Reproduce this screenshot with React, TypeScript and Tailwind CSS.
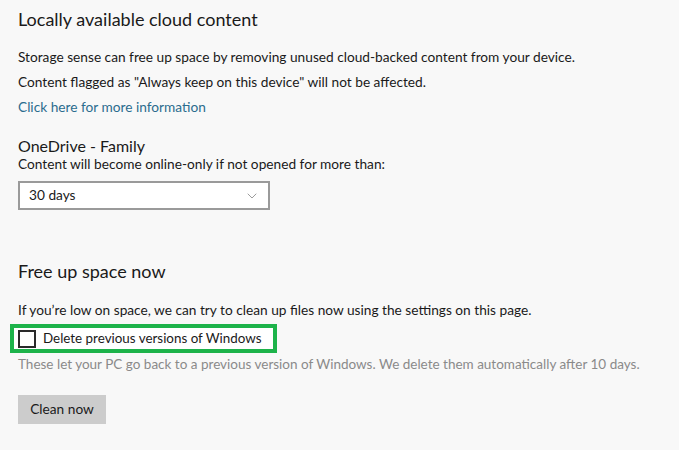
import { ChevronDown } from 'lucide-react';

const font = { fontFamily: 'Lato, "Noto Sans", sans-serif' };

export default function App() {
  return (
    <div className="w-[679px] h-[450px] bg-[#f8f8f8] text-[#1a1a1a] overflow-hidden" style={font}>
      <div className="pl-[18px] pt-[6px]">
        <h1 className="text-[18px] leading-[26px] font-normal">Locally available cloud content</h1>

        <p className="mt-[12px] text-[13.7px] leading-[25px] whitespace-nowrap">
          Storage sense can free up space by removing unused cloud-backed content from your device.
        </p>
        <p className="text-[13.7px] leading-[25px] whitespace-nowrap">
          Content flagged as "Always keep on this device" will not be affected.
        </p>
        <p className="text-[13.7px] leading-[25px] text-[#2b6c8e]">Click here for more information</p>

        <h2 className="mt-[16px] text-[16px] leading-[22px]">OneDrive - Family</h2>
        <p className="-mt-[3px] text-[13.7px] leading-[19px] whitespace-nowrap">
          Content will become online-only if not opened for more than:
        </p>
        <div className="mt-[8px] w-[252px] h-[29px] border-2 border-[#9a9a9a] bg-white flex items-center justify-between pl-[9px] pr-[8px]">
          <span className="text-[13.7px]">30 days</span>
          <ChevronDown className="w-4 h-4 text-[#888]" strokeWidth={1.25} />
        </div>

        <h2 className="mt-[50px] text-[18px] leading-[22px]">Free up space now</h2>
        <p className="mt-[18px] text-[13.7px] leading-[20px] whitespace-nowrap">
          If you’re low on space, we can try to clean up files now using the settings on this page.
        </p>

        <div className="-ml-[8px] mt-[4px] w-[267px] h-[29px] border-[4px] border-[#1db34a] bg-white flex items-center pl-[4px]">
          <div className="w-[18px] h-[18px] border-2 border-[#2a2a2a] bg-white" />
          <span className="ml-[7px] text-[13.4px] whitespace-nowrap">Delete previous versions of Windows</span>
        </div>
        <p className="mt-0 text-[13.5px] leading-[22px] text-[#8a8a8a] whitespace-nowrap">
          These let your PC go back to a previous version of Windows. We delete them automatically after 10 days.
        </p>

        <button className="mt-[20px] w-[88px] h-[29px] bg-[#cccccc] text-[13.7px] text-[#1a1a1a]">
          Clean now
        </button>
      </div>
    </div>
  );
}
